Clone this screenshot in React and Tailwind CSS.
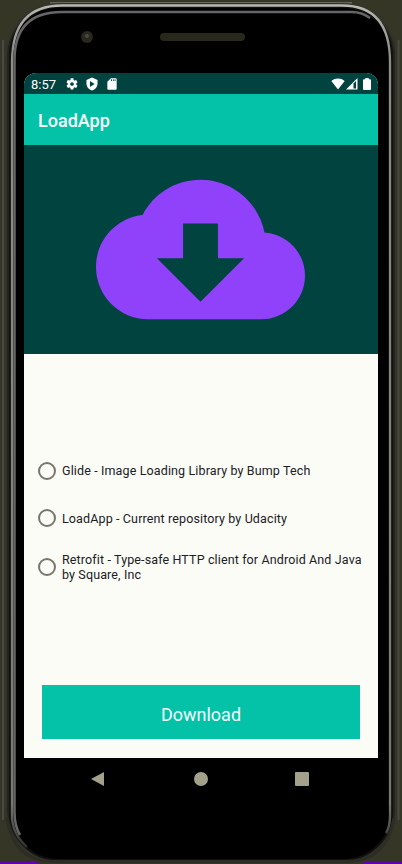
import React from "react";

const options = [
  { label: "Glide - Image Loading Library by Bump Tech", height: "h-[47px]" },
  { label: "LoadApp - Current repository by Udacity", height: "h-[48px]" },
  { label: "Retrofit - Type-safe HTTP client for Android And Java by Square, Inc", height: "h-[50px]" },
];

function DeviceFrame() {
  return (
    <svg className="absolute inset-0" width="402" height="864" viewBox="0 0 402 864" fill="none" aria-hidden="true">
      <defs>
        <linearGradient id="rim" x1="0" y1="0" x2="0" y2="864" gradientUnits="userSpaceOnUse">
          <stop offset="0" stopColor="#bdbdb8" />
          <stop offset="0.06" stopColor="#8d8d89" />
          <stop offset="0.93" stopColor="#777774" />
          <stop offset="0.98" stopColor="#34342e" />
          <stop offset="1" stopColor="#292922" />
        </linearGradient>
      </defs>
      <rect width="402" height="864" fill="#363626" />
      <path d="M3 40V820M398.5 40V820" stroke="#494943" strokeWidth="2" />
      <path d="M50 3H352" stroke="#66665c" strokeWidth="2" />
      <rect x="6" y="4" width="390" height="858" rx="53" fill="#24241c" stroke="#33332b" strokeWidth="2" />
      <rect x="10" y="7" width="382" height="853" rx="49" fill="#000" stroke="#10100c" strokeWidth="2" />
      <path d="M27 847Q12 834 12 815V62Q12 5.5 62 5.5H342Q390 5.5 390 62V815Q390 827 386 833" stroke="url(#rim)" strokeWidth="2.3" />
      <path d="M20 835Q14.5 826 14.5 812V60Q14.5 12 62 12H352Q362 12 370 18" stroke="#65656a" strokeWidth="2.5" />
      <path d="M7 818Q13 861.5 54 861.5H346Q387 861.5 394 818" stroke="#2d2d25" strokeWidth="3" />
      <path d="M0 861H34L42 864H0zM402 861H368L359 864H402z" fill="#6200b4" />
      <circle cx="87" cy="37" r="6" fill="#28281f" />
      <circle cx="87" cy="36" r="2" fill="#4a4a42" />
      <rect x="160" y="33" width="85" height="8" rx="4" fill="#28281c" />
    </svg>
  );
}

function StatusBar() {
  return (
    <div className="flex h-[21px] items-center bg-[#00433f] pl-[7px] pr-1 text-white">
      <span className="w-[34px] pt-px text-[13px] leading-none">8:57</span>
      <svg width="14" height="14" viewBox="0 0 24 24" fill="currentColor">
        <path d="M19.14 12.94c.04-.3.06-.61.06-.94s-.02-.64-.07-.94l2.03-1.58a.5.5 0 0 0 .12-.61l-1.92-3.32a.49.49 0 0 0-.59-.22l-2.39.96a7 7 0 0 0-1.62-.94l-.36-2.54A.48.48 0 0 0 13.92 2h-3.84a.47.47 0 0 0-.47.41l-.36 2.54c-.59.24-1.13.57-1.62.94l-2.39-.96a.48.48 0 0 0-.59.22L2.74 8.87a.47.47 0 0 0 .12.61l2.03 1.58a6 6 0 0 0 0 1.88l-2.03 1.58a.5.5 0 0 0-.12.61l1.92 3.32c.12.22.37.29.59.22l2.39-.96c.5.38 1.03.7 1.62.94l.36 2.54c.05.24.24.41.48.41h3.84c.24 0 .44-.17.47-.41l.36-2.54c.59-.24 1.13-.56 1.62-.94l2.39.96c.22.08.47 0 .59-.22l1.92-3.32a.47.47 0 0 0-.12-.61zM12 15.2a3.2 3.2 0 1 1 0-6.4 3.2 3.2 0 0 1 0 6.4z" />
      </svg>
      <svg className="ml-[6px]" width="14" height="14" viewBox="0 0 24 24">
        <path fill="currentColor" d="M12 1 2.5 5v6c0 5.55 4 10.74 9.500 12 5.500-1.260 9.500-6.450 9.500-12V5z" />
        <path fill="#00433f" d="M8.500 7 16.500 12 8.500 17z" />
      </svg>
      <svg className="ml-[6px]" width="14" height="14" viewBox="0 0 24 24" fill="currentColor">
        <path d="M18 2h-8L4.02 8 4 20c0 1.1.9 2 2 2h12c1.1 0 2-.9 2-2V4c0-1.1-.9-2-2-2zm-6 5h-1.5V4H12zm3 0h-1.5V4H15zm3 0h-1.5V4H18z" />
      </svg>
      <svg className="ml-auto" width="14" height="12" viewBox="0 0 14 12" fill="currentColor">
        <path d="M.3 3C4-.3 10-.3 13.7 3L7 11.5z" />
      </svg>
      <svg className="ml-px" width="12" height="12" viewBox="0 0 12 12">
        <path d="M0 11.5 11.5 0v11.5z" fill="#fff" />
        <path d="M7.5 5.5 10 3v7.5H7.5z" fill="#00433f" />
      </svg>
      <svg className="ml-[5px] mr-[3px]" width="8" height="12" viewBox="0 0 8 12" fill="currentColor">
        <path d="M2.3 0h3.4v1.2H7q1 0 1 1V11q0 1-1 1H1q-1 0-1-1V2.2q0-1 1-1h1.3z" />
      </svg>
    </div>
  );
}

export default function App() {
  return (
    <div className="relative h-[864px] w-[402px] overflow-hidden bg-black font-[Roboto,'Noto_Sans',sans-serif]">
      <DeviceFrame />
      <div className="relative flex h-full flex-col px-6 pt-[73px]">
        <div className="flex h-[684.5px] w-[354px] flex-col overflow-hidden rounded-t-[12px] bg-[#fcfcf7]">
          <StatusBar />
          <header className="flex h-[51px] items-center bg-[#04c2a7] pl-[14px] text-[18px] font-medium text-[#f8fffc]">
            <h1 className="pt-px">LoadApp</h1>
          </header>
          <div className="flex h-[209px] bg-[#00433f] pl-[72px]">
            <svg width="209" height="209" viewBox="0 0 24 24" fill="#9041fa">
              <path d="M19.35 10.04C18.67 6.59 15.64 4 12 4 9.11 4 6.6 5.64 5.35 8.04 2.34 8.36 0 10.91 0 14c0 3.31 2.69 6 6 6h13c2.76 0 5-2.24 5-5 0-2.64-2.05-4.78-4.65-4.96zM17 13l-5 5-5-5h3V9h4v4h3z" />
            </svg>
          </div>
          <main className="flex grow flex-col px-[14px] pt-[93px]">
            {options.map((option) => (
              <label key={option.label} className={`flex items-center ${option.height}`}>
                <input type="radio" name="repository" className="h-[18px] w-[18px] shrink-0 appearance-none rounded-full border-2 border-[#77776e]" />
                <span className="ml-[6px] w-[308px] text-[12.5px] leading-[15px] tracking-[0.13px] text-[#20201e]">{option.label}</span>
              </label>
            ))}
            <button className="mx-[4px] mb-[18.5px] mt-auto h-[54px] bg-[#04c2a7] pt-[5px] text-[18px] text-[#f4fffc]">Download</button>
          </main>
        </div>
        <nav className="flex h-[42px] items-center px-[67px] text-[#a3a08b]">
          <svg width="14" height="16" viewBox="0 0 14 16" fill="currentColor"><path d="M0 8 13 1v14z" /></svg>
          <span className="ml-[89px] h-[14px] w-[14px] rounded-full bg-current" />
          <span className="ml-[87px] h-[14px] w-[14px] rounded-[1px] bg-current" />
        </nav>
      </div>
    </div>
  );
}
